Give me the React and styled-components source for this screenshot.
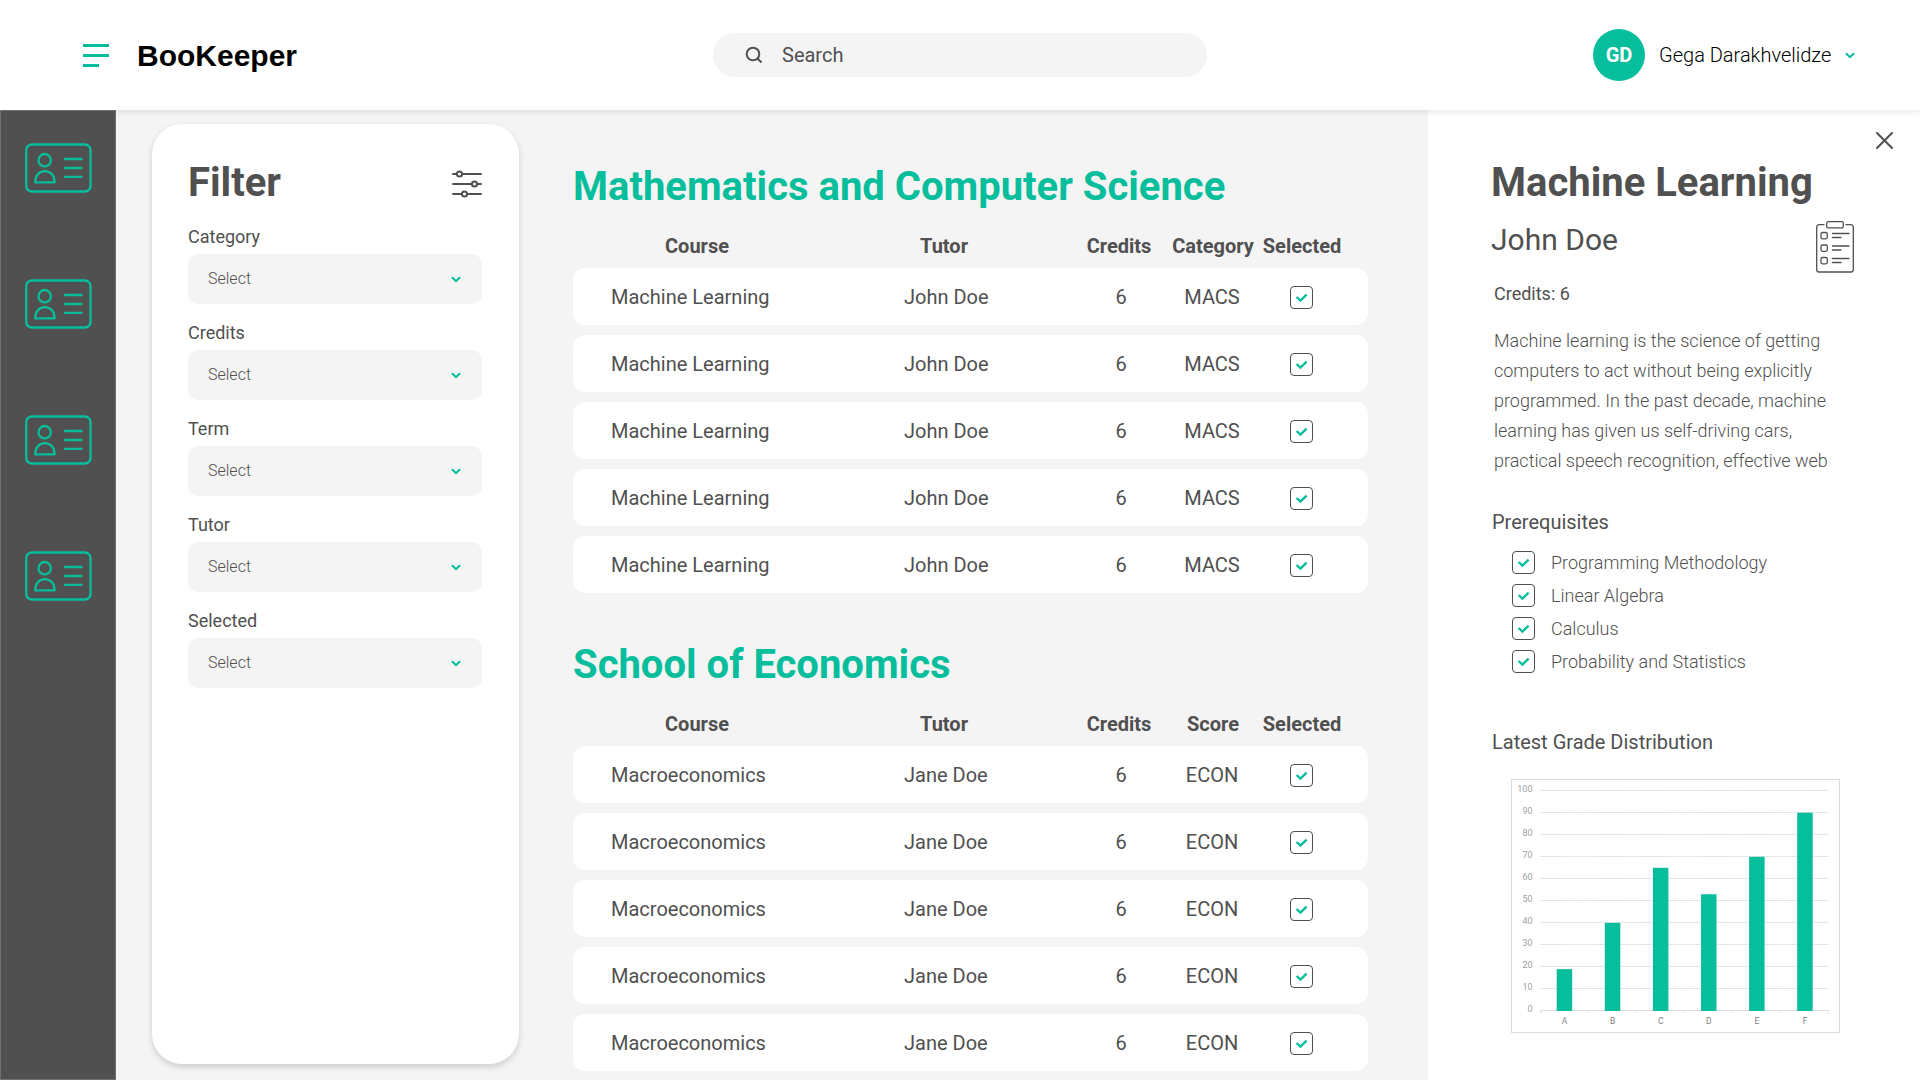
import React from "react";
import styled, { createGlobalStyle } from "styled-components";

const Global = createGlobalStyle`
  *{box-sizing:border-box;margin:0}
  body{margin:0;background:#f4f4f4;font-family:Roboto,sans-serif;color:#505050;overflow:hidden}
`;
const green = "#06be9b";

const Page = styled.div`
  width: 1920px;
  height: 1080px;
  display: flex;
  flex-direction: column;
`;
const Header = styled.header`
  height: 110px;
  flex: none;
  display: grid;
  grid-template-columns: 713px 494px 1fr;
  align-items: center;
  background: #fff;
  box-shadow: 0 3px 6px rgba(0, 0, 0, 0.08);
  position: relative;
  z-index: 1;
`;
const Brand = styled.div`
  display: flex;
  align-items: center;
  gap: 28px;
  padding-left: 83px;
`;
const BrandName = styled.span`
  font: 700 30px/34px "Liberation Sans", Arial, sans-serif;
  color: #000;
  padding-top: 1px;
`;
const Search = styled.div`
  height: 44px;
  border-radius: 22px;
  background: #f4f4f4;
  display: flex;
  align-items: center;
  gap: 19px;
  padding-left: 32px;
  font-size: 20px;
`;
const User = styled.div`
  display: flex;
  align-items: center;
  padding-left: 386px;
`;
const Avatar = styled.div`
  width: 52px;
  height: 52px;
  border-radius: 50%;
  background: ${green};
  color: #fff;
  font-weight: 700;
  font-size: 20px;
  display: grid;
  place-items: center;
`;
const UserName = styled.span`
  font-size: 20px;
  font-weight: 300;
  color: #000;
  margin: 0 14px 0 14px;
`;
const Body = styled.div`
  flex: 1;
  min-height: 0;
  display: flex;
`;
const Sidebar = styled.nav`
  position: relative;
  z-index: 2;
  width: 116px;
  background: #505050;
  border: 1px solid #707070;
  display: flex;
  flex-direction: column;
  align-items: flex-start;
  gap: 86px;
  padding: 32px 0 0 24px;
`;
const Filter = styled.section`
  width: 367px;
  height: 940px;
  margin: 14px 0 0 36px;
  padding: 35px 37px 35px 36px;
  background: #fff;
  border-radius: 30px;
  box-shadow: 0 3px 6px rgba(0, 0, 0, 0.16);
`;
const FilterHead = styled.div`
  display: flex;
  justify-content: space-between;
  align-items: center;
  height: 47px;
  margin-bottom: 20px;

  svg {
    margin-top: 2px;
  }
`;
const Title = styled.h1`
  font-size: 40px;
  line-height: 47px;
  font-weight: 700;
`;
const Field = styled.div`
  height: 96px;
`;
const Label = styled.div`
  font-size: 18px;
  line-height: 21px;
  height: 28px;
`;
const Select = styled.div`
  height: 50px;
  border-radius: 10px;
  background: #f4f4f4;
  display: flex;
  align-items: center;
  justify-content: space-between;
  padding: 0 21px 0 20px;
  font-size: 16px;
  line-height: 18px;
  font-weight: 300;
`;
const Main = styled.main`
  width: 795px;
  margin-left: 54px;
  padding-top: 53px;
`;
const Section = styled.section`
  height: 478px;
`;
const SectionTitle = styled.h2`
  font-size: 40px;
  line-height: 47px;
  font-weight: 700;
  color: ${green};
`;
const Columns = styled.div`
  display: grid;
  justify-items: center;
  align-items: center;
  font-size: 20px;
`;
const HeadRow = styled(Columns)`
  grid-template-columns: 248px 246px 104px 84px 94px 1fr;
  height: 58px;
  padding-top: 14px;
  font-weight: 700;
`;
const Row = styled(Columns)`
  grid-template-columns: 248px 246px 108px 74px 104px 1fr;
  height: 57px;
  padding-top: 2px;
  margin-bottom: 10px;
  background: #fff;
  border-radius: 12px;
`;
const Cell = styled.span`
  white-space: nowrap;

  ${Row} & {
    padding-bottom: 2px;
  }
`;
const LeadCell = styled(Cell)`
  justify-self: start;
  padding-left: ${(p) => p.$indent}px;
`;
const Box = styled.span`
  width: 23px;
  height: 23px;
  border: 1px solid #505050;
  border-radius: 4px;
  display: grid;
  place-items: center;
`;
const Details = styled.aside`
  width: 492px;
  margin-left: auto;
  background: #fff;
  display: flex;
  flex-direction: column;
  padding: 22px 27px 0 63px;
`;
const Close = styled.div`
  height: 17px;
  display: flex;
  justify-content: flex-end;
`;
const DetailsTitle = styled(Title)`
  margin-top: 10px;
`;
const TutorRow = styled.div`
  display: flex;
  justify-content: space-between;
  height: 68px;
  padding: 15px 39px 0 0;
  align-items: flex-start;
`;
const Tutor = styled.div`
  font-size: 30px;
  line-height: 37px;
`;
const Credits = styled.div`
  font-size: 18px;
  line-height: 21px;
  margin: 9px 0 0 3px;
`;
const Description = styled.p`
  font-size: 18px;
  line-height: 30px;
  font-weight: 300;
  margin: 22px 0 0 3px;
  white-space: pre-line;
`;
const SubHead = styled.h3`
  font-size: 20px;
  line-height: 24px;
  font-weight: 400;
  margin: ${(p) => p.$top}px 0 0 1px;
`;
const Prereqs = styled.div`
  margin: 12px 0 0 21px;
`;
const Prereq = styled.div`
  height: 33px;
  display: flex;
  align-items: center;
  gap: 16px;
  font-size: 18px;
  font-weight: 300;
`;
const ChartSvg = styled.svg`
  margin: 25px 0 0 20px;
  flex: none;
  font-family: Roboto, sans-serif;
  font-size: 9px;
`;

const Chevron = () => (
  <svg width="10" height="7" viewBox="0 0 10 7" fill="none" stroke={green} strokeWidth="2">
    <path d="M.9 1.2 5 5.2 9.1 1.2" />
  </svg>
);
const Checkbox = () => (
  <Box>
    <svg width="13" height="11" viewBox="0 0 13 11" fill="none" stroke={green} strokeWidth="2.4">
      <path d="M1.600 5 5.400 8.600 11.600 2.600" />
    </svg>
  </Box>
);
const IdCard = () => (
  <svg width="67" height="50" viewBox="0 0 67 50" fill="none" stroke={green} strokeWidth="2.3" strokeLinecap="round" strokeLinejoin="round">
    <rect x="1.200" y="1.500" width="64.300" height="47" rx="5.500" />
    <circle cx="19.700" cy="17.200" r="6.200" />
    <path d="M10.200 39.300c0-6.500 3.700-11.200 9.700-11.200s9.700 4.700 9.700 11.200z" />
    <path d="M39.800 16h16.800M39.800 25h16.800M39.800 33.800h16.800" />
  </svg>
);
const Sliders = () => (
  <svg width="30" height="28" viewBox="0 0 30 28" fill="none" stroke="#505050" strokeWidth="2" strokeLinecap="round">
    <path d="M1 4h3.500M10.500 4H29M1 14h18.500M25.500 14H29M1 24h8.500M15.500 24H29" />
    <circle cx="7.500" cy="4" r="2.600" />
    <circle cx="22.500" cy="14" r="2.600" />
    <circle cx="12.500" cy="24" r="2.600" />
  </svg>
);
const Clipboard = () => (
  <svg width="38" height="52" viewBox="0 0 38 52" fill="none" stroke="#505050" strokeWidth="1.300" strokeLinecap="round">
    <path d="M8 3.700H3A2.300 2.300 0 0 0 .7 6v42.700A2.300 2.300 0 0 0 3 51h32a2.300 2.300 0 0 0 2.300-2.300V6A2.300 2.300 0 0 0 35 3.700h-5" />
    <rect x="10.700" y=".7" width="16.600" height="6.200" rx="1.500" />
    {[12, 24.5, 37].map((y) => (
      <g key={y}>
        <rect x="5" y={y - 0.5} width="6.300" height="6.300" rx="1.500" />
        <path d={`M16.500 ${y + 0.5}H33M16.500 ${y + 4.5}H25`} />
      </g>
    ))}
  </svg>
);

const bars = [["A", 19], ["B", 40], ["C", 65], ["D", 53], ["E", 70], ["F", 90]];
const Chart = () => (
  <ChartSvg width="329" height="254" viewBox="0 0 329 254">
    <rect x=".5" y=".5" width="328" height="253" fill="none" stroke="#dcdcdc" />
    {Array.from({ length: 11 }, (_, i) => (
      <g key={i}>
        <path
          d={`M29 ${231.5 - i * 22}H318`}
          stroke="#dedede"
          strokeDasharray={i ? "2 .6" : undefined}
        />
        <text x="21.500" y={233.4 - i * 22} textAnchor="end" fill="#a0a0a0">
          {i * 10}
        </text>
      </g>
    ))}
    {Array.from({ length: 7 }, (_, i) => (
      <path key={i} d={`M${29.5 + i * 48} 232v2`} stroke="#dedede" />
    ))}
    {bars.map(([name, value], i) => (
      <g key={name}>
        <rect x={45.7 + i * 48.1} y={232 - value * 2.203} width="15.500" height={value * 2.203} fill={green} />
        <text x={53.5 + i * 48.1} y="245.300" textAnchor="middle" fill="#808080" fontSize="8.500">
          {name}
        </text>
      </g>
    ))}
  </ChartSvg>
);

const Table = ({ title, fourth, course, tutor, code }) => (
  <Section>
    <SectionTitle>{title}</SectionTitle>
    <HeadRow>
      <Cell>Course</Cell>
      <Cell>Tutor</Cell>
      <Cell>Credits</Cell>
      <Cell>{fourth}</Cell>
      <Cell>Selected</Cell>
    </HeadRow>
    {[0, 1, 2, 3, 4].map((n) => (
      <Row key={n}>
        <LeadCell $indent={38}>{course}</LeadCell>
        <LeadCell $indent={83}>{tutor}</LeadCell>
        <Cell>6</Cell>
        <Cell>{code}</Cell>
        <Checkbox />
      </Row>
    ))}
  </Section>
);

export default function App() {
  return (
    <Page>
      <Global />
      <Header>
        <Brand>
          <svg width="26" height="23" fill={green}>
            <path d="M0 0h26v3H0zM0 10h26v3H0zM0 20h16v3H0z" />
          </svg>
          <BrandName>BooKeeper</BrandName>
        </Brand>
        <Search>
          <svg width="18" height="18" viewBox="0 0 18 18" fill="none" stroke="#505050" strokeWidth="2">
            <circle cx="8" cy="8" r="6.300" />
            <path d="m12.500 12.500 4 4" />
          </svg>
          Search
        </Search>
        <User>
          <Avatar>GD</Avatar>
          <UserName>Gega Darakhvelidze</UserName>
          <Chevron />
        </User>
      </Header>
      <Body>
        <Sidebar>
          <IdCard />
          <IdCard />
          <IdCard />
          <IdCard />
        </Sidebar>
        <Filter>
          <FilterHead>
            <Title>Filter</Title>
            <Sliders />
          </FilterHead>
          {["Category", "Credits", "Term", "Tutor", "Selected"].map((name) => (
            <Field key={name}>
              <Label>{name}</Label>
              <Select>
                Select
                <Chevron />
              </Select>
            </Field>
          ))}
        </Filter>
        <Main>
          <Table title="Mathematics and Computer Science" fourth="Category" course="Machine Learning" tutor="John Doe" code="MACS" />
          <Table title="School of Economics" fourth="Score" course="Macroeconomics" tutor="Jane Doe" code="ECON" />
        </Main>
        <Details>
          <Close>
            <svg width="17" height="17" viewBox="0 0 17 17" stroke="#505050" strokeWidth="2" strokeLinecap="round">
              <path d="m1 1 15 15M16 1 1 16" />
            </svg>
          </Close>
          <DetailsTitle>Machine Learning</DetailsTitle>
          <TutorRow>
            <Tutor>John Doe</Tutor>
            <Clipboard />
          </TutorRow>
          <Credits>Credits: 6</Credits>
          <Description>
            {"Machine learning is the science of getting\ncomputers to act without being explicitly\nprogrammed. In the past decade, machine\nlearning has given us self-driving cars,\npractical speech recognition, effective web"}
          </Description>
          <SubHead $top={34}>Prerequisites</SubHead>
          <Prereqs>
            {["Programming Methodology", "Linear Algebra", "Calculus", "Probability and Statistics"].map((name) => (
              <Prereq key={name}>
                <Checkbox />
                {name}
              </Prereq>
            ))}
          </Prereqs>
          <SubHead $top={52}>Latest Grade Distribution</SubHead>
          <Chart />
        </Details>
      </Body>
    </Page>
  );
}
